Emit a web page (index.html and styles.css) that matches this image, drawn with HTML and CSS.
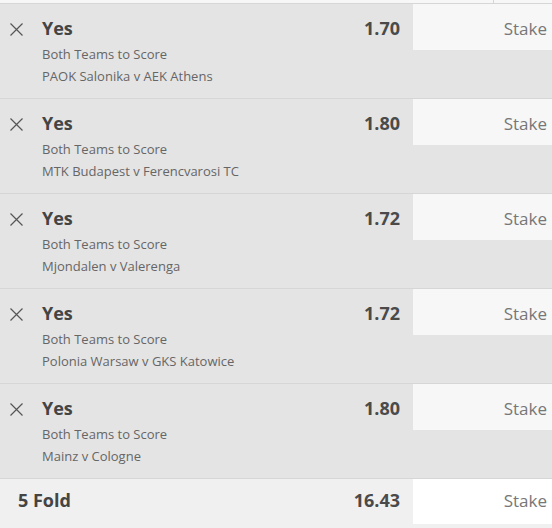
FILE: index.html
```html
<!DOCTYPE html>
<html>
<head>
  <title>Bet Slip</title>
  <meta name="viewport" content="width=device-width, initial-scale=1">
  <link rel="stylesheet" href="styles.css">
</head>
<body>
  <div class="tabs"><div class="tab"></div><div class="tab tab-last"></div></div>

  <div class="bet">
    <div class="remove"><svg width="13" height="13" viewBox="0 0 13 13"><path d="M0.5 0.5L12.5 12.5M12.5 0.5L0.5 12.5" stroke="#555" stroke-width="1.2" fill="none"/></svg></div>
    <div class="info">
      <div class="sel">Yes</div>
      <div class="mkt">Both Teams to Score</div>
      <div class="mkt">PAOK Salonika v AEK Athens</div>
    </div>
    <div class="odds">1.70</div>
    <div class="stake">Stake</div>
  </div>

  <div class="bet">
    <div class="remove"><svg width="13" height="13" viewBox="0 0 13 13"><path d="M0.5 0.5L12.5 12.5M12.5 0.5L0.5 12.5" stroke="#555" stroke-width="1.2" fill="none"/></svg></div>
    <div class="info">
      <div class="sel">Yes</div>
      <div class="mkt">Both Teams to Score</div>
      <div class="mkt">MTK Budapest v Ferencvarosi TC</div>
    </div>
    <div class="odds">1.80</div>
    <div class="stake">Stake</div>
  </div>

  <div class="bet">
    <div class="remove"><svg width="13" height="13" viewBox="0 0 13 13"><path d="M0.5 0.5L12.5 12.5M12.5 0.5L0.5 12.5" stroke="#555" stroke-width="1.2" fill="none"/></svg></div>
    <div class="info">
      <div class="sel">Yes</div>
      <div class="mkt">Both Teams to Score</div>
      <div class="mkt">Mjondalen v Valerenga</div>
    </div>
    <div class="odds">1.72</div>
    <div class="stake">Stake</div>
  </div>

  <div class="bet">
    <div class="remove"><svg width="13" height="13" viewBox="0 0 13 13"><path d="M0.5 0.5L12.5 12.5M12.5 0.5L0.5 12.5" stroke="#555" stroke-width="1.2" fill="none"/></svg></div>
    <div class="info">
      <div class="sel">Yes</div>
      <div class="mkt">Both Teams to Score</div>
      <div class="mkt">Polonia Warsaw v GKS Katowice</div>
    </div>
    <div class="odds">1.72</div>
    <div class="stake">Stake</div>
  </div>

  <div class="bet">
    <div class="remove"><svg width="13" height="13" viewBox="0 0 13 13"><path d="M0.5 0.5L12.5 12.5M12.5 0.5L0.5 12.5" stroke="#555" stroke-width="1.2" fill="none"/></svg></div>
    <div class="info">
      <div class="sel">Yes</div>
      <div class="mkt">Both Teams to Score</div>
      <div class="mkt">Mainz v Cologne</div>
    </div>
    <div class="odds">1.80</div>
    <div class="stake">Stake</div>
  </div>

  <div class="fold">
    <div class="fold-name">5 Fold</div>
    <div class="odds">16.43</div>
    <div class="stake stake-white">Stake</div>
  </div>
</body>
</html>
```

FILE: styles.css
```css
body { margin: 0; background: #f0f0f0; font-family: "Open Sans", "Noto Sans", sans-serif; color: #444; }
.tabs { display: flex; height: 3px; background: #f7f7f7; border-bottom: 1px solid #d6d6d6; }
.tab { flex: 0 0 493px; border-right: 1px solid #d6d6d6; }
.tab-last { flex: 1; border-right: none; }
.bet { display: flex; height: 94px; background: #e4e4e4; border-bottom: 1px solid #d6d6d6; }
.remove { width: 42px; padding: 19px 0 0 10px; box-sizing: border-box; }
.remove svg { display: block; }
.info { flex: 1; padding-top: 12px; }
.sel { font-size: 18px; font-weight: 700; line-height: 24px; margin-bottom: 3px; color: #444; }
.mkt { font-size: 13px; line-height: 22px; color: #666; }
.odds { width: 100px; margin-right: 13px; padding-top: 12px; text-align: right; font-size: 18px; font-weight: 700; line-height: 24px; color: #4a4a4a; }
.stake { width: 139px; height: 46px; box-sizing: border-box; padding: 13px 5px 0 0; background: #f7f7f7; text-align: right; font-size: 17px; line-height: 24px; color: #777; }
.fold { display: flex; height: 49px; background: #f0f0f0; }
.fold-name { flex: 1; padding: 9px 0 0 18px; font-size: 18px; font-weight: 700; line-height: 24px; color: #444; }
.fold .odds { padding-top: 9px; }
.stake-white { background: #fff; height: 45px; padding-top: 10px; }
```
